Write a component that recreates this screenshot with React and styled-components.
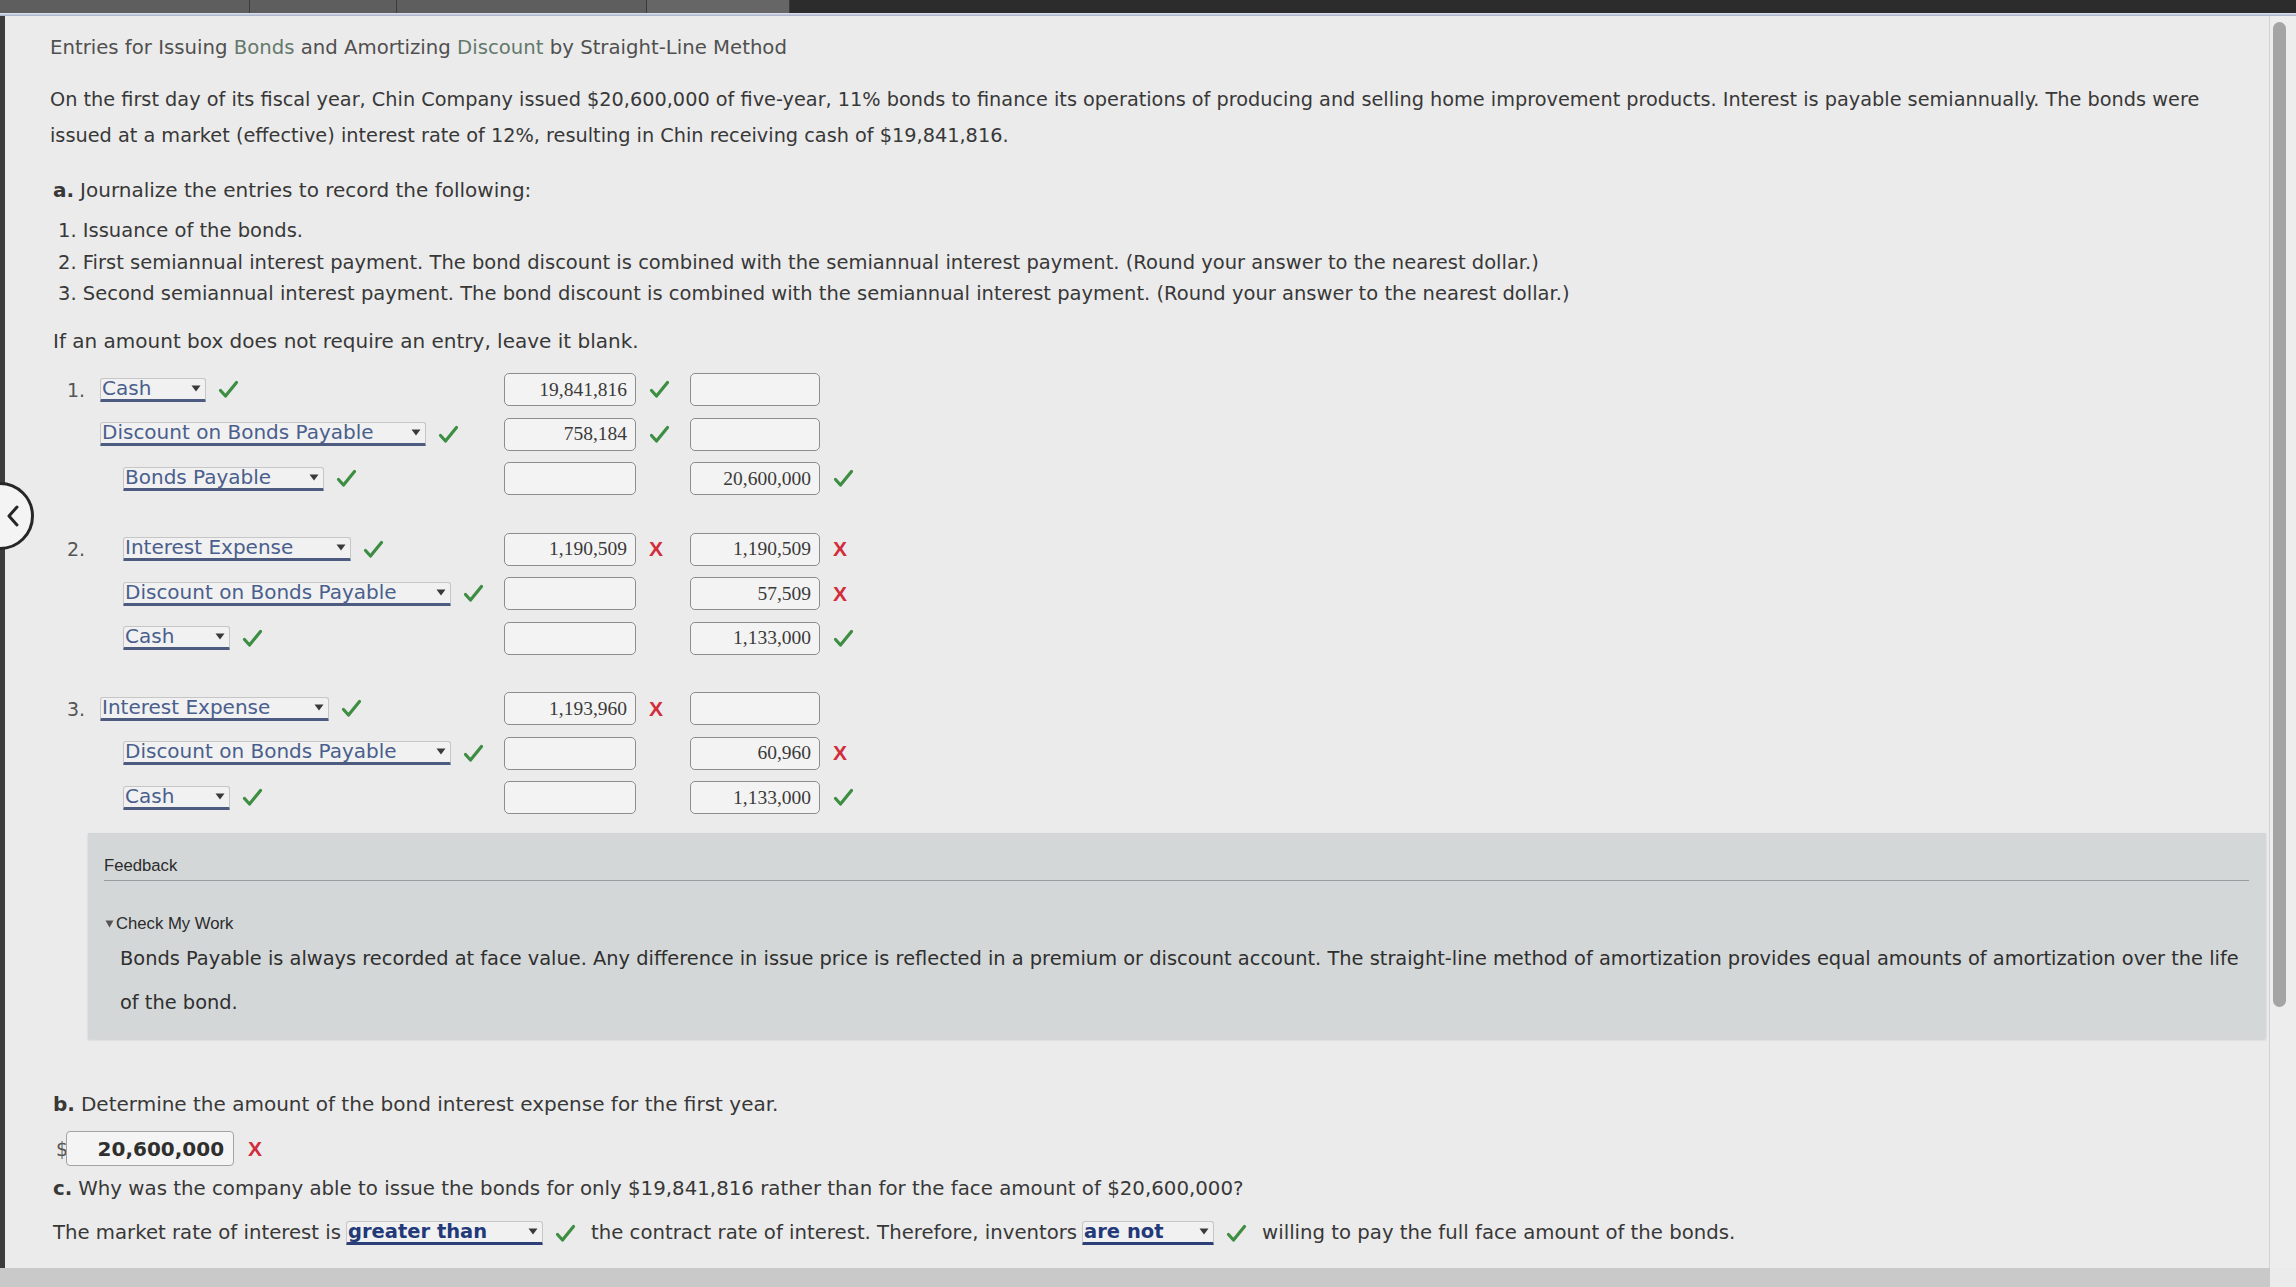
import React from 'react';
import styled, { createGlobalStyle } from 'styled-components';

const Global = createGlobalStyle`
  html, body { margin: 0; padding: 0; }
  body {
    width: 2296px; height: 1287px; overflow: hidden;
    background: #ebebeb;
    font-family: "DejaVu Sans", Verdana, sans-serif;
  }
`;

const Screen = styled.div`
  position: relative;
  width: 2296px; height: 1287px;
  display: flex; flex-direction: column;
  overflow: hidden;
  background: #ebebeb;
`;

const TopBar = styled.div`
  height: 13px; flex-shrink: 0;
  display: flex;
  background: #2c2c2c;
`;
const Tab = styled.div`
  width: ${p => p.$w}px;
  background: ${p => p.$bg || '#5e5e5e'};
  border-right: 1px solid #3b3b3b;
`;
const TopEdge = styled.div`
  height: 3px; flex-shrink: 0;
  background: linear-gradient(#e3e7f0, #a3aec8);
`;

const Main = styled.div`
  flex: 1; min-height: 0;
  display: flex;
`;
const LeftEdge = styled.div`
  width: 5px; flex-shrink: 0;
  background: #3c3c3c;
`;
const Page = styled.div`
  flex: 1; min-width: 0;
  padding: 20px 0 0 45px;
  color: #383838;
  font-size: 20px;
`;
const ScrollTrack = styled.div`
  width: 27px; flex-shrink: 0;
  border-left: 1px solid #d2d2d2;
  background: #ededed;
  padding: 6px 0 0 3px;
  box-sizing: border-box;
`;
const Thumb = styled.div`
  width: 13px; height: 985px;
  border-radius: 7px;
  background: #a4a4a4;
`;
const BottomBar = styled.div`
  height: 19px; flex-shrink: 0;
  display: flex;
`;
const BottomFill = styled.div`
  width: 2270px;
  background: #c9c9c9;
`;

const Title = styled.div`
  line-height: 24px;
  font-size: 19.7px;
  color: #505050;
  white-space: nowrap;
`;
const Term = styled.span`
  color: #64796b;
`;
const Para = styled.p`
  margin: 22px 0 0;
  line-height: 36px;
  font-size: 19.3px;
  white-space: nowrap;
`;
const PartLabel = styled.div`
  margin: ${p => p.$mt}px 0 0 3px;
  line-height: 30px;
  font-size: ${p => p.$fs || 20}px;
  white-space: nowrap;
`;
const Letter = styled.b`
  font-weight: bold;
  margin-right: 6px;
`;
const Steps = styled.ol`
  margin: 10px 0 0;
  padding: 0 0 0 8px;
  list-style: none;
  line-height: 31.5px;
  font-size: 19.5px;
`;
const Step = styled.li`
  white-space: nowrap;
`;

const Entries = styled.div`
  margin: 12px 0 0 17px;
  display: flex; flex-direction: column;
  gap: 26px;
`;
const Entry = styled.div`
  display: flex; flex-direction: column;
`;
const Row = styled.div`
  height: 44.5px;
  display: grid;
  grid-template-columns: 33px 404px 132px 54px 130px 40px;
  align-items: center;
`;
const Num = styled.span`
  color: #555;
  font-size: 19px;
`;
const AccountCell = styled.div`
  display: flex; align-items: center; gap: 12px;
  padding-left: ${p => p.$indent || 0}px;
`;
const Select = styled.span`
  box-sizing: border-box;
  width: ${p => p.$w}px;
  height: 24px;
  display: inline-flex; align-items: flex-end; justify-content: space-between;
  padding: 0 4px 0 1px;
  border: 1px solid #c6c6c6;
  border-bottom: 3px solid #4d5b80;
  border-radius: 3px 3px 1px 1px;
  background: #f1f1f1;
  color: #4a5f8d;
  font-size: 20px;
  line-height: 21px;
  white-space: nowrap;
`;
const InlineSelect = styled(Select)`
  vertical-align: -4px;
  color: #22397a;
  font-weight: bold;
  font-size: 19.5px;
  border-bottom: 3px solid #2c3f78;
  margin: 0 12px 0 5px;
`;
const Arrow = styled.svg`
  width: 10px; height: 7px;
  margin-bottom: 7px;
  flex-shrink: 0;
`;
const Amount = styled.div`
  box-sizing: border-box;
  width: 100%; height: 33px;
  border: 1.5px solid #8d8d8d;
  border-radius: 5px;
  background: #f3f3f3;
  padding-right: 8px;
  display: flex; align-items: center; justify-content: flex-end;
  font-family: "Liberation Serif", "Times New Roman", serif;
  font-size: 19.5px;
  color: #3a3a3a;
`;
const Mark = styled.div`
  padding-left: 13px;
  display: flex; align-items: center;
`;
const Cross = styled.span`
  font-family: "Liberation Sans", Arial, sans-serif;
  font-weight: bold;
  font-size: 21px;
  line-height: 20px;
  color: #d22d3b;
`;
const CheckSvg = styled.svg`
  width: 21px; height: 19px;
  flex-shrink: 0;
`;

const Feedback = styled.div`
  margin: 13px 0 0 38px;
  width: 2178px;
  box-sizing: border-box;
  padding: 23px 17px 14px 16px;
  background: #d3d7d8;
  box-shadow: 0 1px 2px rgba(0,0,0,0.12);
`;
const FbHead = styled.div`
  font-family: "Liberation Sans", Arial, sans-serif;
  font-size: 16.7px;
  line-height: 20px;
  color: #2b2b2b;
`;
const FbRule = styled.div`
  margin-top: 4px;
  height: 1px;
  background: #979d9f;
`;
const FbToggle = styled.div`
  margin: 33px 0 0 1px;
  font-family: "Liberation Sans", Arial, sans-serif;
  font-size: 16.7px;
  line-height: 20px;
  color: #2b2b2b;
  display: flex; align-items: center; gap: 2px;
`;
const FbText = styled.p`
  margin: 3px 0 0 16px;
  line-height: 44px;
  font-size: 19.4px;
  color: #2f2f2f;
  white-space: nowrap;
`;

const AnswerRow = styled.div`
  margin: 12px 0 0 6px;
  height: 35px;
  display: flex; align-items: center;
`;
const Dollar = styled.span`
  color: #555;
  font-size: 19px;
  margin-right: -2px;
  align-self: flex-start;
  margin-top: 7px;
`;
const AnswerBox = styled.div`
  box-sizing: border-box;
  width: 168px; height: 35px;
  border: 1.5px solid #a3a3a3;
  border-radius: 4px;
  background: #f4f4f4;
  display: flex; align-items: center; justify-content: flex-end;
  padding-right: 9px;
  font-weight: bold;
  font-size: 20px;
  color: #2f2f2f;
  margin-right: 14px;
`;
const SentenceLine = styled.div`
  margin: ${p => p.$mt}px 0 0 3px;
  line-height: 30px;
  font-size: 19.7px;
  white-space: nowrap;
  display: flex; align-items: center;
`;
const Gap = styled.span`
  display: inline-block;
  width: ${p => p.$w}px;
`;

const BackButton = styled.div`
  position: absolute;
  left: -34px; top: 482px;
  width: 62px; height: 62px;
  border: 3px solid #262626;
  border-radius: 50%;
  background: #f4f4f4;
  display: flex; align-items: center; justify-content: center;
`;

const Check = () => (
  <CheckSvg viewBox="0 0 21 19">
    <path d="M2.5 10.5 L7.5 16 L18.5 2.5" fill="none" stroke="#3d8d42" strokeWidth="3.2" strokeLinecap="round" strokeLinejoin="round" />
  </CheckSvg>
);

const Caret = () => (
  <Arrow viewBox="0 0 10 7">
    <path d="M0.5 0.5 L9.5 0.5 L5 6.5 Z" fill="#3a3a3a" />
  </Arrow>
);

const Dropdown = ({ w, children }) => (
  <Select $w={w}><span>{children}</span><Caret /></Select>
);

const entries = [
  {
    n: '1.',
    rows: [
      { acct: 'Cash', w: 106, indent: 0, debit: '19,841,816', dm: 'ok', credit: '', cm: null },
      { acct: 'Discount on Bonds Payable', w: 326, indent: 0, debit: '758,184', dm: 'ok', credit: '', cm: null },
      { acct: 'Bonds Payable', w: 201, indent: 23, debit: '', dm: null, credit: '20,600,000', cm: 'ok' },
    ],
  },
  {
    n: '2.',
    rows: [
      { acct: 'Interest Expense', w: 228, indent: 23, debit: '1,190,509', dm: 'bad', credit: '1,190,509', cm: 'bad' },
      { acct: 'Discount on Bonds Payable', w: 328, indent: 23, debit: '', dm: null, credit: '57,509', cm: 'bad' },
      { acct: 'Cash', w: 107, indent: 23, debit: '', dm: null, credit: '1,133,000', cm: 'ok' },
    ],
  },
  {
    n: '3.',
    rows: [
      { acct: 'Interest Expense', w: 229, indent: 0, debit: '1,193,960', dm: 'bad', credit: '', cm: null },
      { acct: 'Discount on Bonds Payable', w: 328, indent: 23, debit: '', dm: null, credit: '60,960', cm: 'bad' },
      { acct: 'Cash', w: 107, indent: 23, debit: '', dm: null, credit: '1,133,000', cm: 'ok' },
    ],
  },
];

const MarkFor = ({ kind }) => (
  <Mark>{kind === 'ok' ? <Check /> : kind === 'bad' ? <Cross>X</Cross> : null}</Mark>
);

export default function App() {
  return (
    <>
      <Global />
      <Screen>
        <TopBar>
          <Tab $w={249} />
          <Tab $w={146} />
          <Tab $w={249} />
          <Tab $w={142} $bg="#666" />
        </TopBar>
        <TopEdge />
        <Main>
          <LeftEdge />
          <Page>
            <Title>
              Entries for Issuing <Term>Bonds</Term> and Amortizing <Term>Discount</Term> by Straight-Line Method
            </Title>
            <Para>
              On the first day of its fiscal year, Chin Company issued $20,600,000 of five-year, 11% bonds to finance its operations of producing and selling home improvement products. Interest is payable semiannually. The bonds were
              <br />
              issued at a market (effective) interest rate of 12%, resulting in Chin receiving cash of $19,841,816.
            </Para>
            <PartLabel $mt={21}><Letter>a.</Letter>Journalize the entries to record the following:</PartLabel>
            <Steps>
              <Step>1. Issuance of the bonds.</Step>
              <Step>2. First semiannual interest payment. The bond discount is combined with the semiannual interest payment. (Round your answer to the nearest dollar.)</Step>
              <Step>3. Second semiannual interest payment. The bond discount is combined with the semiannual interest payment. (Round your answer to the nearest dollar.)</Step>
            </Steps>
            <PartLabel $mt={16}>If an amount box does not require an entry, leave it blank.</PartLabel>

            <Entries>
              {entries.map(e => (
                <Entry key={e.n}>
                  {e.rows.map((r, i) => (
                    <Row key={i}>
                      <Num>{i === 0 ? e.n : ''}</Num>
                      <AccountCell $indent={r.indent}>
                        <Dropdown w={r.w}>{r.acct}</Dropdown>
                        <Check />
                      </AccountCell>
                      <Amount>{r.debit}</Amount>
                      <MarkFor kind={r.dm} />
                      <Amount>{r.credit}</Amount>
                      <MarkFor kind={r.cm} />
                    </Row>
                  ))}
                </Entry>
              ))}
            </Entries>

            <Feedback>
              <FbHead>Feedback</FbHead>
              <FbRule />
              <FbToggle>
                <svg width="9" height="8" viewBox="0 0 9 8"><path d="M0.5 0.5 L8.5 0.5 L4.5 7.5 Z" fill="#555" /></svg>
                Check My Work
              </FbToggle>
              <FbText>
                Bonds Payable is always recorded at face value. Any difference in issue price is reflected in a premium or discount account. The straight-line method of amortization provides equal amounts of amortization over the life
                <br />
                of the bond.
              </FbText>
            </Feedback>

            <PartLabel $mt={50}><Letter>b.</Letter>Determine the amount of the bond interest expense for the first year.</PartLabel>
            <AnswerRow>
              <Dollar>$</Dollar>
              <AnswerBox>20,600,000</AnswerBox>
              <Cross>X</Cross>
            </AnswerRow>

            <PartLabel $mt={8} $fs={19.8}><Letter>c.</Letter>Why was the company able to issue the bonds for only $19,841,816 rather than for the face amount of $20,600,000?</PartLabel>
            <SentenceLine $mt={14}>
              The market rate of interest is
              <InlineSelect $w={197}><span>greater than</span><Caret /></InlineSelect>
              <Check />
              <Gap $w={15} />
              the contract rate of interest. Therefore, inventors
              <InlineSelect $w={132}><span>are not</span><Caret /></InlineSelect>
              <Check />
              <Gap $w={15} />
              willing to pay the full face amount of the bonds.
            </SentenceLine>
          </Page>
          <ScrollTrack><Thumb /></ScrollTrack>
        </Main>
        <BottomBar><BottomFill /></BottomBar>
        <BackButton>
          <svg width="14" height="22" viewBox="0 0 14 22" style={{ marginLeft: 26 }}>
            <path d="M11 2 L3 11 L11 20" fill="none" stroke="#262626" strokeWidth="3" strokeLinecap="round" strokeLinejoin="round" />
          </svg>
        </BackButton>
      </Screen>
    </>
  );
}
